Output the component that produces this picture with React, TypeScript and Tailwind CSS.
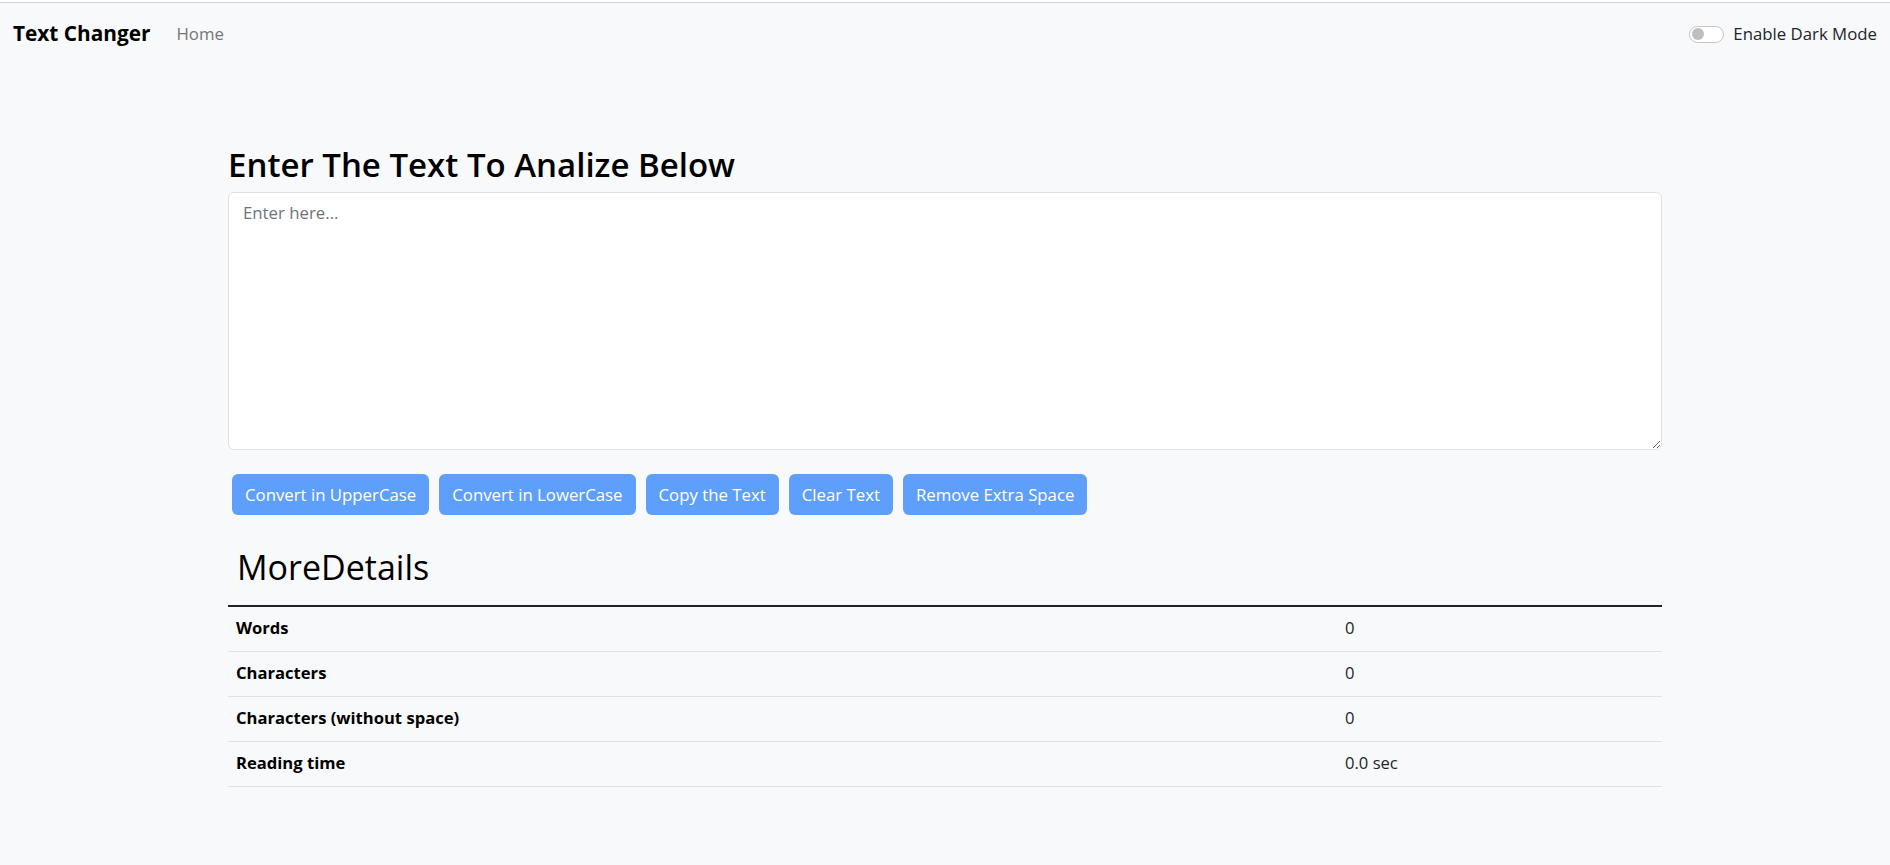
import { useState } from "react";

const font = { fontFamily: '"Open Sans", "Noto Sans", sans-serif' };

const rows = [
  { label: "Words", value: "0" },
  { label: "Characters", value: "0" },
  { label: "Characters (without space)", value: "0" },
  { label: "Reading time", value: "0.0 sec" },
];

const buttons = [
  "Convert in UpperCase",
  "Convert in LowerCase",
  "Copy the Text",
  "Clear Text",
  "Remove Extra Space",
];

export default function App() {
  const [text, setText] = useState("");

  return (
    <div className="min-h-[865px] bg-[#f8f9fa] text-[#212529]" style={font}>
      <div className="h-[2px] bg-white" />
      <div className="h-px bg-[#cfd1d3]" />

      {/* navbar */}
      <nav className="flex h-[62px] items-center justify-between px-[13px]">
        <div className="flex items-center">
          <span className="text-[20.8px] font-bold text-black">Text Changer</span>
          <span className="ml-[26px] text-[16.8px] text-[#757677]">Home</span>
        </div>
        <label className="flex items-center gap-[9px]">
          <span className="flex h-[17px] w-[35px] items-center rounded-full border border-[#c4c5c6] bg-white pl-[2px]">
            <span className="h-[12px] w-[12px] rounded-full bg-[#bfbfbf]" />
          </span>
          <span className="text-[16.8px] text-[#212529]">Enable Dark Mode</span>
        </label>
      </nav>

      <main className="mx-auto w-[1434px] pt-[80px]">
        <h1 className="text-[33px] font-semibold leading-[1.2] text-black">Enter The Text To Analize Below</h1>
        <textarea
          value={text}
          onChange={(e) => setText(e.target.value)}
          placeholder="Enter here..."
          className="mt-[7px] block h-[258px] w-full rounded-[6px] border border-[#dee2e6] bg-white px-[14px] py-[7px] text-[16.8px] leading-[1.5] outline-none placeholder:text-[#6c757d]"
        />

        <div className="mt-[24px] flex gap-[10px] pl-[4px]">
          {buttons.map((b) => (
            <button
              key={b}
              className="h-[41px] rounded-[6px] bg-[#5f9ffc] px-[13px] text-[16.8px] text-white"
            >
              {b}
            </button>
          ))}
        </div>

        <h2 className="mt-[30px] pl-[9px] text-[34px] font-normal leading-[44px] text-black">MoreDetails</h2>

        <div className="mt-[16px] border-t-2 border-[#212529]">
          {rows.map((r) => (
            <div key={r.label} className="flex h-[45px] items-center border-b border-[#dee2e6] text-[16.6px]">
              <div className="w-[1117px] pl-[8px] font-bold text-black">{r.label}</div>
              <div className="text-[#212529]">{r.value}</div>
            </div>
          ))}
        </div>
      </main>
    </div>
  );
}
